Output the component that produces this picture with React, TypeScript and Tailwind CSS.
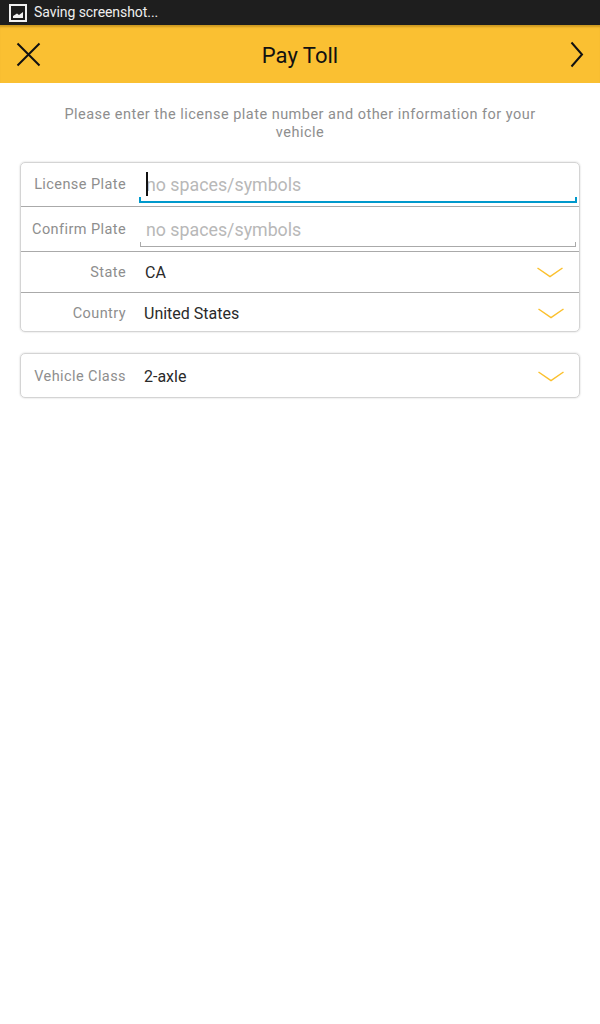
const font = { fontFamily: 'Roboto, sans-serif' };

function Chevron({ className }: { className: string }) {
  return (
    <svg className={className} width="28" height="14" viewBox="0 0 28 14" fill="none" stroke="#fbc02d" strokeWidth="1.5">
      <path d="M1.5 2 L14 10.5 L26.5 2" />
    </svg>
  );
}

function PlateInput({ active }: { active?: boolean }) {
  return (
    <div
      className={
        active
          ? 'ml-[12px] mr-[2px] mt-[1px] h-[36px] flex-1 border-b-2 border-l-2 border-r-2 border-[#0099cc] [clip-path:polygon(0_30px,3px_30px,3px_33px,calc(100%-3px)_33px,calc(100%-3px)_30px,100%_30px,100%_100%,0_100%)]'
          : 'ml-[13px] mr-[3px] mt-[-1px] h-[36px] flex-1 border-b border-l border-r border-[#aaaaaa] [clip-path:polygon(0_31px,2px_31px,2px_34px,calc(100%-2px)_34px,calc(100%-2px)_31px,100%_31px,100%_100%,0_100%)]'
      }
    />
  );
}

function Row({ label, children, className }: { label: string; children: React.ReactNode; className: string }) {
  return (
    <div className={`flex items-center ${className}`}>
      <div className="w-[106px] pr-[1px] text-right text-[14.5px] tracking-[0.42px] text-[#8e8e8e]">{label}</div>
      {children}
    </div>
  );
}

function InputRow({ label, active }: { label: string; active?: boolean }) {
  return (
    <Row label={label} className={`relative border-b border-[#aaaaaa] ${active ? 'h-[44px]' : 'h-[45px] pt-[1px]'}`}>
      <PlateInput active={active} />
      <span className={`absolute left-[125px] text-[17.8px] leading-[24px] text-[#b8b8b8] ${active ? 'top-[10px]' : 'top-[11px]'}`}>
        no spaces/symbols
      </span>
      {active && <span className="absolute left-[125px] top-[9px] h-[24px] w-[2px] bg-[#111111]" />}
    </Row>
  );
}

function SelectRow({ label, value, className, valueClass, chevronClass }: { label: string; value: string; className: string; valueClass: string; chevronClass: string }) {
  return (
    <Row label={label} className={className}>
      <span className={`flex-1 text-[16px] text-[#2a2a2a] ${valueClass}`}>{value}</span>
      <Chevron className={`shrink-0 ${chevronClass}`} />
    </Row>
  );
}

export default function App() {
  return (
    <div className="min-h-[1024px] bg-white" style={font}>
      {/* status bar */}
      <div className="flex h-[25px] items-center bg-[#1e1e1e] pl-[9px] text-white">
        <svg width="18" height="18" viewBox="0 0 18 18">
          <rect x="1" y="1" width="16" height="16" fill="none" stroke="#f2f2f2" strokeWidth="2" />
          <path d="M4 14 L4 12 L8 9.5 L10 11 L14 8 L14 14 Z" fill="#f2f2f2" />
        </svg>
        <span className="ml-[7px] text-[14px] tracking-[-0.06px] text-[#eeeeee]">Saving screenshot...</span>
      </div>

      {/* header */}
      <div className="grid h-[58px] grid-cols-[60px_1fr_60px] items-center bg-[#fac032] px-[16px] shadow-[inset_0_3px_2px_-1px_rgba(120,80,0,0.35)]">
        <svg width="25" height="25" viewBox="0 0 25 25" stroke="#111" strokeWidth="2" fill="none">
          <path d="M1.5 1.5 L23.5 23.5 M23.5 1.5 L1.5 23.5" />
        </svg>
        <span className="pt-[2px] text-center text-[22px] font-normal text-[#111111]">Pay Toll</span>
        <svg className="justify-self-end" width="14" height="27" viewBox="0 0 14 27" stroke="#111" strokeWidth="2" fill="none">
          <path d="M1.5 1.5 L12 13.5 L1.5 25.5" />
        </svg>
      </div>

      <div className="px-[20px]">
        <p className="mx-auto mt-[23px] w-[480px] text-center text-[14.5px] leading-[18px] tracking-[0.48px] text-[#8e8e8e]">
          Please enter the license plate number and other information for your vehicle
        </p>

        <div className="mt-[20px] rounded-[5px] border border-[#d4d4d4] shadow-[0_0_2px_#cccccc]">
          <InputRow label="License Plate" active />
          <InputRow label="Confirm Plate" />
          <SelectRow label="State" value="CA" className="h-[41px] border-b border-[#aaaaaa] pt-[2px]" valueClass="ml-[18px]" chevronClass="mr-[15px]" />
          <SelectRow label="Country" value="United States" className="h-[38px] pt-[3px]" valueClass="ml-[17px]" chevronClass="mr-[14px]" />
        </div>

        <div className="mt-[21px] rounded-[5px] border border-[#d4d4d4] shadow-[0_0_2px_#cccccc]">
          <SelectRow label="Vehicle Class" value="2-axle" className="h-[43px] pt-[3px]" valueClass="ml-[17px]" chevronClass="mr-[14px]" />
        </div>
      </div>
    </div>
  );
}
